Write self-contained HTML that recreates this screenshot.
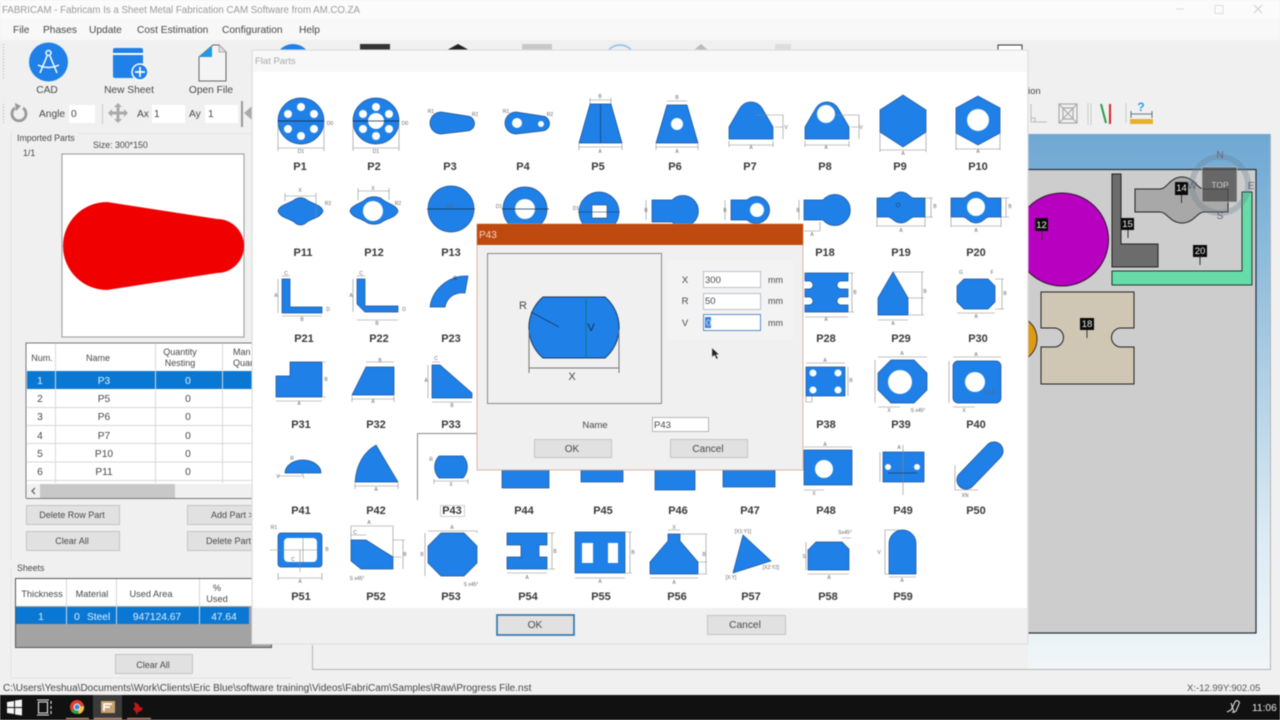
<!DOCTYPE html>
<html><head><meta charset="utf-8"><title>FABRICAM</title>
<style>
html,body{margin:0;padding:0;width:1280px;height:720px;overflow:hidden;background:#f0f0f0}
svg{display:block;position:absolute;left:0;top:0;filter:blur(.4px)}
text{font-family:"Liberation Sans",sans-serif;font-size:10.2px;fill:#484848}
.c{text-anchor:middle}
.l{font-size:11px;font-weight:700;fill:#3a3a3a;text-anchor:middle}
.d{font-size:5px;fill:#666;text-anchor:middle}
.b{fill:#1f80e8;stroke:#1d4f8f;stroke-width:.7}
.n{fill:none;stroke:#8a8a8a;stroke-width:.6}
.btn{fill:#e1e1e1;stroke:#c4c4c4;stroke-width:1}
.lab{fill:#0a0a0a}
.w{fill:#fff}
</style></head><body>
<svg width="1280" height="720" viewBox="0 0 1280 720" xmlns="http://www.w3.org/2000/svg">
<defs>
<linearGradient id="sky" x1="0" y1="0" x2="0" y2="1"><stop offset="0" stop-color="#6ea8d3"/><stop offset=".35" stop-color="#9fc6e0"/><stop offset=".75" stop-color="#dcebf3"/><stop offset="1" stop-color="#f1f6f8"/></linearGradient>
<clipPath id="cv"><rect x="1028" y="134" width="242" height="536"/></clipPath>
</defs>
<rect width="1280" height="720" fill="#f0f0f0"/>
<!-- title bar -->
<rect width="1280" height="19" fill="#fbfbfb"/>
<text x="2" y="13" style="font-size:9.700px;fill:#9a9a9a">FABRICAM - Fabricam Is a Sheet Metal Fabrication CAM Software from AM.CO.ZA</text>
<path d="M1176 9h8" stroke="#ddd"/><rect x="1215" y="5.500" width="8" height="8" fill="none" stroke="#ddd"/><path d="M1254 5l8 8M1262 5l-8 8" stroke="#ccc"/>
<!-- menu -->
<rect y="19" width="1280" height="21" fill="#f8f8f8"/>
<text x="13" y="33">File</text><text x="43" y="33">Phases</text><text x="89" y="33">Update</text><text x="137" y="33">Cost Estimation</text><text x="222" y="33">Configuration</text><text x="299" y="33">Help</text>
<path d="M3.500 44v36M3.500 104v20" stroke="#aaa" stroke-dasharray="1 2"/>
<!-- toolbar -->
<circle cx="48.500" cy="62" r="19.500" fill="#1f80e8"/>
<g fill="none" stroke="#fff" stroke-width="1.500"><circle cx="48.500" cy="53" r="2.500"/><path d="M47 56l-7 17M50 56l7 17M38 65q10.500 5 21 0"/></g>
<rect x="113" y="48" width="30" height="30" rx="2" fill="#1f80e8"/><rect x="113" y="53" width="30" height="2" fill="#fff"/>
<circle cx="140" cy="72" r="8" fill="#1f80e8" stroke="#fff" stroke-width="1.500"/><path d="M135 72h10M140 67v10" stroke="#fff" stroke-width="1.700"/>
<path d="M213 45h6l7 7v29h-27V57z" fill="#f4f4f4" stroke="#666" stroke-width="1"/><path d="M199 57l13-11v11z" fill="#1f9ae8"/><path d="M219 45v7h7" fill="#ddd" stroke="#999" stroke-width=".7"/>
<text x="47" y="93" class="c">CAD</text><text x="129" y="93" class="c">New Sheet</text><text x="211" y="93" class="c">Open File</text>
<path d="M15 108a7 7 0 1 0 8 0" fill="none" stroke="#999" stroke-width="2.800"/><path d="M15 103l6 3-5 5z" fill="#999"/>
<text x="39" y="117">Angle</text><rect x="69" y="105" width="26" height="18" fill="#fff"/><text x="71" y="117">0</text>
<rect x="102" y="104" width="1" height="20" fill="#c8c8c8"/>
<path d="M118 103l4 4h-2.500v4.500h4.500V109l4 4-4 4v-2.500h-4.500v4.500h2.500l-4 4-4-4h2.500v-4.500H112v2.500l-4-4 4-4v2.500h4.500V107H114z" fill="#aaa"/>
<text x="137" y="117">Ax</text><rect x="152" y="105" width="33" height="18" fill="#fff"/><text x="154" y="117">1</text>
<text x="189" y="117">Ay</text><rect x="205" y="105" width="33" height="18" fill="#fff"/><text x="208" y="117">1</text>
<rect x="241" y="101" width="2" height="26" fill="#999"/><path d="M252 106l-8 7 8 7z" fill="#aaa"/>
<!-- peek icons behind dialog -->
<circle cx="293" cy="62" r="18" fill="#1f80e8"/>
<rect x="360" y="44" width="30" height="8" fill="#333"/><path d="M447 50l11-6 11 6z" fill="#222"/>
<rect x="522" y="44" width="30" height="8" fill="#c8c8c8"/><circle cx="620" cy="60" r="15" fill="none" stroke="#9cc9ea" stroke-width="2"/>
<path d="M694 50l7-6 7 6z" fill="#bbb"/><rect x="775" y="44" width="16" height="8" fill="#ddd"/>
<rect x="998" y="45" width="24" height="10" fill="#fff" stroke="#333"/>
<!-- left panel -->
<path d="M11 133.500h2M78 133.500H252M11 134V560" fill="none" stroke="#e4e4e4"/>
<text x="17" y="141" style="font-size:8.800px">Imported Parts</text>
<text x="93" y="148" style="font-size:8.800px">Size: 300*150</text><text x="23" y="156" style="font-size:8.800px">1/1</text>
<rect x="62" y="154" width="182" height="183" fill="#fff" stroke="#999"/>
<path d="M107 202L217 219A27 27 0 0 1 217 273L107 290A44 44 0 0 1 107 202Z" fill="#f00000"/>
<!-- table -->
<rect x="26" y="343" width="226" height="155" fill="#fff"/>
<path d="M26 498V343H252" fill="none" stroke="#777" stroke-width="1"/>
<rect x="27" y="371" width="225" height="18" fill="#0a78d2"/>
<g stroke="#d8d8d8"><path d="M55.500 344V483M155.500 344V483M222.500 344V483M27 407.500H252M27 425.500H252M27 443.500H252M27 462H252M27 480.500H252"/></g>
<rect x="27" y="484" width="225" height="14" fill="#f0f0f0"/><rect x="40" y="484" width="135" height="14" fill="#c8c8c8"/><path d="M35 488l-3 3 3 3" fill="none" stroke="#555" stroke-width="1.200"/>
<path d="M26 498.500H252" stroke="#777"/>
<g><text x="42" y="361" class="c" style="font-size:9px">Num.</text><text x="98" y="361" class="c" style="font-size:9px">Name</text><text x="180" y="355" class="c" style="font-size:9px">Quantity</text><text x="180" y="366" class="c" style="font-size:9px">Nesting</text><text x="233" y="355" style="font-size:9px">Man</text><text x="233" y="366" style="font-size:9px">Quan</text></g>
<text x="40" y="384" class="c" style="fill:#dff0ff">1</text><text x="104" y="384" class="c" style="fill:#dff0ff">P3</text><text x="188" y="384" class="c" style="fill:#dff0ff">0</text>
<text x="40" y="402" class="c">2</text><text x="104" y="402" class="c">P5</text><text x="188" y="402" class="c">0</text>
<text x="40" y="420" class="c">3</text><text x="104" y="420" class="c">P6</text><text x="188" y="420" class="c">0</text>
<text x="40" y="439" class="c">4</text><text x="104" y="439" class="c">P7</text><text x="188" y="439" class="c">0</text>
<text x="40" y="457" class="c">5</text><text x="104" y="457" class="c">P10</text><text x="188" y="457" class="c">0</text>
<text x="40" y="475" class="c">6</text><text x="104" y="475" class="c">P11</text><text x="188" y="475" class="c">0</text>
<rect x="26.500" y="505.500" width="93" height="19" class="btn"/><text x="72" y="518" class="c" style="font-size:9px">Delete Row Part</text>
<rect x="26.500" y="531.500" width="93" height="19" class="btn"/><text x="72" y="544" class="c" style="font-size:9px">Clear All</text>
<rect x="187.500" y="505.500" width="70" height="19" class="btn"/><text x="211" y="518" style="font-size:9px">Add Part &gt;</text>
<rect x="187.500" y="531.500" width="70" height="19" class="btn"/><text x="206" y="544" style="font-size:9px">Delete Part</text>
<!-- sheets -->
<path d="M11 568V678H292" fill="none" stroke="#e4e4e4"/><text x="17" y="571" style="font-size:8.800px">Sheets</text>
<rect x="15.500" y="578.500" width="256" height="69" fill="#a3a3a3" stroke="#555"/>
<rect x="16" y="579" width="236" height="27" fill="#fff"/><rect x="16" y="607" width="233" height="17" fill="#0a78d2"/>
<path d="M66.500 579v45M116.500 579v45M199.500 579v45" stroke="#d0d8e0"/>
<text x="42" y="597" class="c" style="font-size:9.200px">Thickness</text><text x="92" y="597" class="c" style="font-size:9.200px">Material</text><text x="151" y="597" class="c" style="font-size:9.200px">Used Area</text><text x="217" y="591" class="c" style="font-size:9.200px">%</text><text x="217" y="602" class="c" style="font-size:9.200px">Used</text>
<g><text x="41" y="620" class="c" style="fill:#dff0ff">1</text><text x="77" y="620" class="c" style="fill:#dff0ff">0</text><text x="87" y="620" style="fill:#dff0ff">Steel</text><text x="157" y="620" class="c" style="fill:#dff0ff">947124.67</text><text x="224" y="620" class="c" style="fill:#dff0ff">47.64</text></g>
<rect x="115.500" y="654.500" width="77" height="19" class="btn"/><text x="153" y="668" class="c" style="font-size:9px">Clear All</text>
<!-- right canvas -->
<text x="1028" y="94" style="font-size:9.500px">ion</text>
<path d="M1031 104v18h16" fill="none" stroke="#bbb"/><path d="M1031 118h4v4" fill="none" stroke="#bbb"/>
<g fill="none" stroke="#aaa" stroke-width="1.200"><rect x="1059" y="104" width="18" height="19"/><path d="M1059 104l18 19M1077 104l-18 19M1063 108h10v11h-10z"/></g>
<path d="M1088 103v22M1091 103v22" stroke="#ccc"/>
<path d="M1101 104l5 19" stroke="#2a9a48" stroke-width="2"/><path d="M1110 104v20" stroke="#d42a2a" stroke-width="2"/>
<path d="M1126 103v20" stroke="#ccc"/>
<rect x="1130" y="119" width="23" height="5" fill="#e8b030"/><path d="M1131 111v7M1152 111v7M1131 114h21" fill="none" stroke="#456" stroke-width=".8"/><text x="1141" y="111" class="c" style="font-size:12px;fill:#28a0e0;font-weight:700">?</text>
<rect x="1028" y="134" width="242" height="535" fill="url(#sky)"/>
<path d="M1270.500 134V669.500H312.500V645" fill="none" stroke="#b4b4b4"/>
<g clip-path="url(#cv)">
<rect x="1020" y="169.500" width="236" height="463.500" fill="#cdcdcd" stroke="#22303a" stroke-width="1.200"/>
<circle cx="1062" cy="239.500" r="46.500" fill="#b800c0" stroke="#301030"/>
<circle cx="1014" cy="339" r="23" fill="#de9a12" stroke="#333"/>
<path d="M1112 174h9v70h37v23h-46z" fill="#6c6c6c" stroke="#222"/>
<path d="M1135 189H1160C1167 189 1170 177 1182 177C1194 177 1197 189 1204 189H1228V212H1204C1197 212 1194 223 1182 223C1170 223 1167 212 1160 212H1135Z" fill="#a8a8a8" stroke="#222"/>
<path d="M1112 271h130V192h10v93h-140z" fill="#68dca8" stroke="#1c3a30"/>
<path d="M1041 292h93v36h-13a9.500 9.500 0 0 0 0 19h13v37h-93v-37h13a9.500 9.500 0 0 0 0-19h-13z" fill="#cfc7b3" stroke="#222"/>
<g class="lab"><rect x="1035" y="218" width="13" height="13"/><rect x="1121" y="218" width="13" height="12"/><rect x="1175" y="182" width="13" height="13"/><rect x="1193" y="245" width="14" height="12"/><rect x="1080" y="318" width="14" height="12"/></g>
<path d="M1042 231v9M1128 230v8M1181.500 195v8M1200 257v8M1087 330v8" stroke="#333"/>
<g><text x="1041.500" y="228" class="c" style="font-size:9.500px;fill:#eee">12</text><text x="1127.500" y="227" class="c" style="font-size:9.500px;fill:#eee">15</text><text x="1181.500" y="191" class="c" style="font-size:9.500px;fill:#eee">14</text><text x="1200" y="254" class="c" style="font-size:9.500px;fill:#eee">20</text><text x="1087" y="327" class="c" style="font-size:9.500px;fill:#eee">18</text></g>
<circle cx="1220" cy="185" r="28" fill="none" stroke="#6a7f90" stroke-opacity=".32" stroke-width="6"/>
<rect x="1202" y="167" width="35" height="35" fill="#4e4e4e" fill-opacity=".8" stroke="#bbb" stroke-width=".8"/>
<text x="1220" y="188" class="c" style="font-size:8.500px;fill:#ccc">TOP</text>
<text x="1220" y="158" class="c" style="fill:#667">N</text><text x="1220" y="219" class="c" style="fill:#667">S</text><text x="1192" y="189" class="c" style="fill:#667">W</text><text x="1251" y="189" class="c" style="fill:#667">E</text>
</g>
<!-- Flat parts dialog -->
<rect x="252" y="50" width="776" height="594" fill="#f0f0f0" stroke="#ddd"/>
<rect x="253" y="51" width="774" height="21" fill="#f8f8f8"/>
<text x="255" y="64" style="font-size:9.500px;fill:#a8a8a8">Flat Parts</text>
<rect x="253" y="72" width="774" height="536" fill="#fff"/>
<g id="parts">
<!-- P1 -->
<circle cx="301" cy="121" r="23" class="b"/><g class="w"><circle cx="301" cy="107" r="4"/><circle cx="288" cy="114" r="4"/><circle cx="314" cy="114" r="4"/><circle cx="288" cy="129" r="4"/><circle cx="314" cy="129" r="4"/><circle cx="301" cy="136" r="4"/></g>
<path d="M278 121H324" stroke="#123" stroke-width=".8"/><path d="M278 148H324M278 123v28M324 123v28" class="n"/><text x="301" y="153" class="d">D1</text><text x="330" y="125" class="d">D0</text>
<!-- P2 -->
<circle cx="376" cy="121" r="23" class="b"/><g class="w"><circle cx="376" cy="107" r="4"/><circle cx="363" cy="114" r="4"/><circle cx="389" cy="114" r="4"/><circle cx="363" cy="129" r="4"/><circle cx="389" cy="129" r="4"/><circle cx="376" cy="136" r="4"/><circle cx="376" cy="121" r="8"/></g>
<path d="M353 121H399" stroke="#123" stroke-width=".8"/><path d="M353 148H399M353 123v28M399 123v28" class="n"/><text x="376" y="153" class="d">D1</text><text x="405" y="125" class="d">D0</text>
<!-- P3 -->
<path d="M441 112L467 116A7.500 7.500 0 0 1 467 131L441 134A11 11 0 0 1 441 112Z" class="b"/><text x="431" y="113" class="d">R1</text><text x="475" y="116" class="d">R2</text>
<!-- P4 -->
<path d="M516 112L542 116A7.500 7.500 0 0 1 542 131L516 134A11 11 0 0 1 516 112Z" class="b"/><circle cx="517" cy="123" r="5" class="w"/><circle cx="541" cy="124" r="3" class="w"/><text x="506" y="113" class="d">R1</text><text x="550" y="116" class="d">R2</text>
<!-- P5 -->
<path d="M590 104H611L622 143H579Z" class="b"/><path d="M600.500 104V143" stroke="#134" stroke-width=".6"/><path d="M590 100H611M590 98v6M611 98v6M579 147H622M579 144v6M622 144v6" class="n"/><text x="600" y="98" class="d">B</text><text x="600" y="153" class="d">A</text>
<!-- P6 -->
<path d="M667 105H687L698 143H656Z" class="b"/><circle cx="677" cy="124" r="6" class="w"/><path d="M667 101H687M656 147H698M656 144v6M698 144v6" class="n"/><text x="677" y="99" class="d">B</text><text x="677" y="153" class="d">A</text>
<!-- P7 -->
<path d="M729 139V127L740 108A13 13 0 0 1 762 108L773 127V139Z" class="b"/><path d="M729 145H773M729 141v6M773 141v6M755 115H783V139M775 127H783" class="n"/><text x="751" y="149" class="d">A</text><text x="786" y="129" class="d">V</text>
<!-- P8 -->
<path d="M805 139V127L816 108A13 13 0 0 1 838 108L849 127V139Z" class="b"/><circle cx="826" cy="114" r="9" class="w"/><path d="M805 145H849M805 141v6M849 141v6M835 115H859V139M851 127H859" class="n"/><text x="826" y="149" class="d">A</text><text x="861" y="129" class="d">V</text>
<!-- P9 -->
<path d="M903 95L926 110V132L903 147L880 132V110Z" class="b"/><path d="M880 132v20M926 132v20M880 150H926" class="n"/><text x="903" y="155" class="d">A</text>
<!-- P10 -->
<path d="M978 96L1000 108V133L978 145L956 133V108Z" class="b"/><circle cx="978" cy="120" r="11" class="w"/><path d="M956 133v17M1000 133v17M956 149H1000" class="n"/><text x="978" y="153" class="d">A</text>
<!-- P11 -->
<path d="M278 211C279 205 290 203 294 200C298 197 303 197 307 200C311 203 322 205 323 211C322 217 311 219 307 222C303 226 298 226 294 222C290 219 279 217 278 211Z" class="b"/><path d="M285 196H316M285 193v8M316 193v25" class="n"/><text x="300" y="192" class="d">X</text><text x="328" y="205" class="d">R2</text>
<!-- P12 -->
<path d="M350 211C351 205 362 203 366 199C370 196 378 196 382 199C386 203 397 205 398 211C397 217 386 219 382 222C378 225 370 225 366 222C362 219 351 217 350 211Z" class="b"/><circle cx="373" cy="211" r="10" class="w"/><path d="M358 191H389M358 188v12M389 188v12" class="n"/><text x="373" y="190" class="d">X</text><text x="398" y="205" class="d">R2</text>
<!-- P13 -->
<circle cx="451" cy="209" r="23" class="b"/><path d="M427 209H475" stroke="#134" stroke-width=".7"/><text x="450" y="208" class="d">D1</text>
<!-- P14 -->
<circle cx="525" cy="209" r="22" class="b"/><circle cx="525" cy="209" r="10" class="w"/><path d="M502 209H549" stroke="#134" stroke-width=".7"/><text x="499" y="208" class="d">D1</text>
<!-- P15 -->
<circle cx="599" cy="212" r="20" class="b"/><rect x="592" y="205" width="15" height="13" class="w" stroke="#134" stroke-width=".5"/><path d="M578 212H620" stroke="#134" stroke-width=".6"/><text x="576" y="210" class="d">D1</text>
<!-- P16 -->
<path d="M652 200H672A15.500 15.500 0 1 1 672 222H652Z" class="b"/><path d="M646 200v20" class="n"/><text x="646" y="212" class="d">B</text>
<!-- P17 -->
<path d="M731 200H747A13.500 13.500 0 1 1 747 220H731Z" class="b"/><circle cx="757" cy="210" r="7" class="w"/><path d="M725 200v20" class="n"/><text x="725" y="212" class="d">B</text>
<!-- P18 -->
<path d="M804 200H823A15.500 15.500 0 1 1 823 220H804Z" class="b"/><path d="M799 200v20M804 231H820M820 222v9" class="n"/><text x="812" y="236" class="d">A</text><text x="798" y="212" class="d">B</text>
<!-- P19 -->
<path d="M877 198H888C892 198 894 192 901 192C908 192 910 198 914 198H925V217H914C910 217 908 223 901 223C894 223 892 217 888 217H877Z" class="b"/><path d="M877 217v10M925 217v10M877 226H925M925 198h8M925 217h8M931 198v19" class="n"/><text x="901" y="232" class="d">A</text><text x="935" y="208" class="d">B</text><circle cx="898" cy="205" r="2" fill="none" stroke="#134" stroke-width=".4"/>
<!-- P20 -->
<path d="M951 198H963C967 198 969 192 976 192C983 192 985 198 989 198H1001V217H989C985 217 983 223 976 223C969 223 967 217 963 217H951Z" class="b"/><circle cx="976" cy="207" r="9" class="w"/><path d="M951 217v10M1001 217v10M951 226H1001M1001 198h8M1001 217h8M1006 198v19" class="n"/><text x="976" y="232" class="d">A</text><text x="1010" y="208" class="d">B</text>
<!-- P21 -->
<path d="M282 279H290V307H322V313H282Z" class="b"/><path d="M278 279V313M282 276H290M282 316H322" class="n"/><text x="276" y="297" class="d">A</text><text x="302" y="321" class="d">B</text><text x="286" y="275" class="d">C</text><text x="328" y="311" class="d">D</text>
<!-- P22 -->
<path d="M357 279H365V306H398V312H365L357 304Z" class="b"/><path d="M353 279V312M357 276H365M357 320H398" class="n"/><text x="351" y="297" class="d">A</text><text x="377" y="325" class="d">B</text><text x="361" y="275" class="d">C</text><text x="404" y="311" class="d">D</text>
<!-- P23 -->
<path d="M430 307C432 290 448 275 468 276L465 293C455 292 447 297 445 307Z" class="b"/><text x="455" y="280" class="d" style="fill:#134">R</text>
<!-- P28 -->
<path d="M805 273H848V281H841a4 4 0 0 0 0 8h7V297H841a4 4 0 0 0 0 8h7V312H805V305H809a4 4 0 0 0 0-8H805V289H809a4 4 0 0 0 0-8H805Z" class="b"/><path d="M805 317H848M848 273h6M848 312h6M852 273v39" class="n"/><text x="826" y="321" class="d">A</text><text x="855" y="294" class="d">B</text>
<!-- P29 -->
<path d="M878 315V298L893 272L908 298V315Z" class="b"/><path d="M878 320H908M893 272H924M908 298h16M908 315h16M922 272v43" class="n"/><text x="893" y="325" class="d">A</text><text x="925" y="293" class="d">B</text>
<!-- P30 -->
<path d="M964 279H988L995 286V302L988 309H964L957 302V286Z" class="b"/><path d="M957 313H995M995 279h9M995 309h9M1002 279v30" class="n"/><text x="976" y="318" class="d">A</text><text x="1005" y="295" class="d">B</text><text x="961" y="274" class="d">G</text><text x="992" y="274" class="d">F</text>
<!-- P31 -->
<path d="M290 362H322V397H276V376H290Z" class="b"/><path d="M276 401H322M323 362h3M323 397h3" class="n"/><text x="299" y="405" class="d">A</text><text x="326" y="381" class="d">B</text>
<!-- P32 -->
<path d="M366 367H394V395H352Z" class="b"/><path d="M366 362H394M352 399H394M352 396v6M394 396v6" class="n"/><text x="380" y="362" class="d">B</text><text x="373" y="403" class="d">A</text>
<!-- P33 -->
<path d="M432 365H440L472 393V398H432Z" class="b"/><path d="M428 365V398M432 362H440M432 402H472" class="n"/><text x="426" y="382" class="d">A</text><text x="452" y="407" class="d">B</text><text x="436" y="360" class="d">C</text>
<!-- P38 -->
<rect x="806" y="367" width="39" height="29" class="b"/><g class="w"><circle cx="813" cy="373" r="3.500"/><circle cx="838" cy="373" r="3.500"/><circle cx="813" cy="390" r="3.500"/><circle cx="838" cy="390" r="3.500"/></g><path d="M806 363H845M848 367v29M806 396v6H812v-6" class="n"/><text x="825" y="362" class="d">A</text><text x="851" y="382" class="d">B</text>
<!-- P39 -->
<path d="M891 360H914L927 373V390L914 403H891L878 390V373Z" class="b"/><circle cx="900" cy="382" r="12" class="w"/><path d="M878 357H927M875 360v43M878 407H900" class="n"/><text x="902" y="355" class="d">A</text><text x="889" y="412" class="d">X</text><text x="918" y="412" class="d">S x45°</text>
<!-- P40 -->
<rect x="953" y="361" width="48" height="42" rx="5" class="b"/><circle cx="975" cy="382" r="10" class="w"/><path d="M953 357H1001M949 361v42M953 407H975" class="n"/><text x="976" y="356" class="d">A</text><text x="964" y="412" class="d">X</text><text x="990" y="394" class="d">5x R</text>
<!-- P41 -->
<path d="M285 473A18 13 0 0 1 321 473Z" class="b"/><path d="M278 476H302M302 473l2 5" class="n"/><text x="292" y="460" class="d">R</text><text x="278" y="478" class="d">V</text>
<!-- P42 -->
<path d="M355 482Q357 456 376 445L398 482Z" class="b"/><path d="M355 486H398M355 483v6M398 483v6" class="n"/><text x="376" y="491" class="d">A</text>
<!-- P43 -->
<path d="M417.500 500V433.500H490" fill="none" stroke="#8b8b8b" stroke-width="1"/>
<path d="M439 456H463A16 16 0 0 1 463 478H439A16 16 0 0 1 439 456Z" class="b"/><path d="M434 481H468M434 479v5M468 479v5" class="n"/><text x="451" y="486" class="d">X</text><text x="431" y="461" class="d">R</text>
<rect x="440.500" y="505.500" width="24" height="11" fill="#fff" stroke="#bbb" stroke-width=".7"/>
<!-- stubs P44-47 -->
<rect x="502" y="465" width="47" height="23" class="b"/><rect x="581" y="465" width="42" height="17" class="b"/><rect x="655" y="465" width="40" height="25" class="b"/><rect x="723" y="465" width="52" height="22" class="b"/>
<!-- P48 -->
<rect x="804" y="450" width="48" height="35" class="b"/><circle cx="824" cy="469" r="9" class="w"/><path d="M804 447H852M804 490H824" class="n"/><text x="825" y="446" class="d">A</text><text x="814" y="495" class="d">X</text>
<!-- P49 -->
<rect x="883" y="452" width="41" height="30" class="b"/><circle cx="888" cy="467" r="3" class="w"/><circle cx="917" cy="467" r="3" class="w"/><path d="M880 452V482M903 445v50" class="n"/><text x="899" y="449" class="d">A</text><path d="M888 473H917" stroke="#123" stroke-width=".5"/>
<!-- P50 -->
<path d="M966 480L994 451" stroke="#1d4f8f" stroke-width="19" stroke-linecap="round"/><path d="M966 480L994 451" stroke="#1f80e8" stroke-width="17.500" stroke-linecap="round"/><path d="M955 465V490H978" class="n"/><text x="965" y="497" class="d">XN</text>
<!-- P51 -->
<rect x="278" y="533" width="44" height="34" rx="3" class="b"/><rect x="284" y="538" width="33" height="24" rx="4" class="w"/><path d="M270 550H300V572M303 538V562M284 550H317M278 573V580M322 573V580M278 578H322" class="n"/><text x="293" y="561" class="d">C</text><text x="300" y="583" class="d">A</text><text x="274" y="529" class="d">R1</text><text x="327" y="551" class="d">B</text>
<!-- P52 -->
<path d="M351 540H366L393 557V569H361L351 561Z" class="b"/><path d="M351 526H393M351 526v14M393 526v31M393 540h12M403 540v29M393 557h8M351 535H366" class="n"/><text x="369" y="524" class="d">A</text><text x="355" y="534" class="d">C</text><text x="405" y="556" class="d">B</text><text x="357" y="580" class="d">S x45°</text>
<!-- P53 -->
<path d="M441 533H464L477 546V563L464 576H441L428 563V546Z" class="b"/><path d="M428 531H477V533M425 533V576" class="n"/><text x="452" y="529" class="d">A</text><text x="422" y="556" class="d">B</text><text x="471" y="586" class="d">S x45°</text>
<!-- P54 -->
<path d="M507 533H547V545H539V557H547V569H507V557H521V545H507Z" class="b"/><path d="M507 573H547M547 533h8M547 569h8M552 533v36" class="n"/><text x="527" y="579" class="d">A</text><text x="555" y="553" class="d">B</text>
<!-- P55 -->
<rect x="575" y="532" width="50" height="41" class="b"/><rect x="582" y="543" width="11" height="20" class="w"/><rect x="608" y="543" width="10" height="20" class="w"/><path d="M575 578H625M625 532h7M625 573h7M630 532v41" class="n"/><text x="600" y="583" class="d">A</text><text x="633" y="554" class="d">B</text>
<!-- P56 -->
<path d="M650 574V562L668 541V534H680V541L698 562V574Z" class="b"/><path d="M650 578H698M680 534H707M698 562h9M698 574h9M706 534v40M668 530H680" class="n"/><text x="674" y="584" class="d">A</text><text x="704" y="556" class="d">B</text><text x="674" y="529" class="d">X</text>
<!-- P57 -->
<path d="M743 535L771 561L733 573Z" class="b"/><text x="743" y="533" class="d">[X1:Y1]</text><text x="771" y="569" class="d">[X2:Y2]</text><text x="731" y="579" class="d">[X:Y]</text>
<!-- P58 -->
<path d="M816 542H842L849 549V570H808V550Z" class="b"/><path d="M808 574H849M806 542v28M842 538H851" class="n"/><text x="829" y="579" class="d">A</text><text x="804" y="558" class="d">S</text><text x="845" y="534" class="d">Sx45°</text>
<!-- P59 -->
<path d="M889 574V543.500A13.500 13.500 0 0 1 916 543.500V574Z" class="b"/><path d="M889 577H916M885 530V574M885 530H900M885 574H889" class="n"/><text x="902" y="582" class="d">A</text><text x="879" y="554" class="d">V</text>
</g>
<g>
<text x="300" y="170" class="l">P1</text><text x="374" y="170" class="l">P2</text><text x="450" y="170" class="l">P3</text><text x="523" y="170" class="l">P4</text><text x="598" y="170" class="l">P5</text><text x="675" y="170" class="l">P6</text><text x="750" y="170" class="l">P7</text><text x="825" y="170" class="l">P8</text><text x="900" y="170" class="l">P9</text><text x="978" y="170" class="l">P10</text>
<text x="303" y="256" class="l">P11</text><text x="374" y="256" class="l">P12</text><text x="451" y="256" class="l">P13</text><text x="825" y="256" class="l">P18</text><text x="901" y="256" class="l">P19</text><text x="976" y="256" class="l">P20</text>
<text x="304" y="342" class="l">P21</text><text x="379" y="342" class="l">P22</text><text x="451" y="342" class="l">P23</text><text x="826" y="342" class="l">P28</text><text x="901" y="342" class="l">P29</text><text x="978" y="342" class="l">P30</text>
<text x="301" y="428" class="l">P31</text><text x="376" y="428" class="l">P32</text><text x="451" y="428" class="l">P33</text><text x="826" y="428" class="l">P38</text><text x="901" y="428" class="l">P39</text><text x="976" y="428" class="l">P40</text>
<text x="301" y="514" class="l">P41</text><text x="376" y="514" class="l">P42</text><text x="452" y="514" class="l">P43</text><text x="524" y="514" class="l">P44</text><text x="603" y="514" class="l">P45</text><text x="678" y="514" class="l">P46</text><text x="750" y="514" class="l">P47</text><text x="826" y="514" class="l">P48</text><text x="903" y="514" class="l">P49</text><text x="976" y="514" class="l">P50</text>
<text x="301" y="600" class="l">P51</text><text x="376" y="600" class="l">P52</text><text x="451" y="600" class="l">P53</text><text x="528" y="600" class="l">P54</text><text x="601" y="600" class="l">P55</text><text x="677" y="600" class="l">P56</text><text x="751" y="600" class="l">P57</text><text x="828" y="600" class="l">P58</text><text x="903" y="600" class="l">P59</text>
</g>
<rect x="497" y="615" width="77" height="20" fill="#e1e1e1" stroke="#2a72aa" stroke-width="1.600"/><text x="535" y="628" class="c">OK</text>
<rect x="707.500" y="615.500" width="78" height="19" class="btn"/><text x="745" y="628" class="c">Cancel</text>
<!-- P43 dialog -->
<rect x="477" y="224" width="326" height="246" fill="#f0f0f0" stroke="#d8a890" stroke-width=".8"/>
<rect x="477" y="224" width="326" height="21" fill="#bf4a10"/>
<text x="479" y="238" style="font-size:10px;fill:#f6d5c5">P43</text>
<rect x="487.500" y="253.500" width="174" height="150" fill="#f0f0f0" stroke="#8a8a8a"/>
<path d="M543 297H605A40 40 0 0 1 605 358H543A40 40 0 0 1 543 297Z" fill="#1f80e8" stroke="#1a3a60" stroke-width="1"/>
<path d="M586 297V358" stroke="#0a7a80" stroke-width="1"/><path d="M531 312L559 327" stroke="#1a3a60" stroke-width=".8"/>
<path d="M529 330V373M619 330V373M529 368H619" fill="none" stroke="#777" stroke-width="1"/>
<text x="523" y="309" class="c" style="font-size:11px">R</text><text x="591" y="331" class="c" style="font-size:11px;fill:#134">V</text><text x="572" y="380" class="c" style="font-size:11px">X</text>
<rect x="667" y="260" width="126" height="80" fill="#f3f3f3"/>
<rect x="703.500" y="271.500" width="57" height="16" fill="#fff" stroke="#b8c0c8"/><rect x="703.500" y="293.500" width="57" height="16" fill="#fff" stroke="#b8c0c8"/><rect x="703.500" y="314.500" width="57" height="16" fill="#fff" stroke="#5a8cc8"/>
<rect x="705" y="317" width="6" height="11" fill="#3a80d8"/>
<text x="685" y="283" class="c" style="font-size:9.500px">X</text><text x="685" y="304" class="c" style="font-size:9.500px">R</text><text x="685" y="326" class="c" style="font-size:9.500px">V</text>
<text x="705" y="283" style="font-size:9.500px">300</text><text x="705" y="304" style="font-size:9.500px">50</text><text x="706" y="326" style="font-size:9.500px;fill:#cfe2f8">0</text>
<text x="768" y="283" style="font-size:9px">mm</text><text x="768" y="304" style="font-size:9px">mm</text><text x="768" y="326" style="font-size:9px">mm</text>
<path d="M712 348v9l2.500-2 2 4 1.500-.8-2-3.700h3z" fill="#222" stroke="#ccc" stroke-width=".4"/>
<text x="595" y="428" class="c" style="font-size:9.500px">Name</text>
<rect x="652.500" y="417.500" width="56" height="14" fill="#fff" stroke="#b8b8b8"/><text x="654" y="428" style="font-size:9.500px">P43</text>
<rect x="534.500" y="439.500" width="77" height="18" class="btn"/><text x="572" y="452" class="c" style="font-size:10px">OK</text>
<rect x="670.500" y="439.500" width="77" height="18" class="btn"/><text x="708" y="452" class="c" style="font-size:10px">Cancel</text>
<!-- status -->
<rect y="680" width="1280" height="15" fill="#f0f0f0"/>
<text x="3" y="691" style="font-size:10px">C:\Users\Yeshua\Documents\Work\Clients\Eric Blue\software training\Videos\FabriCam\Samples\Raw\Progress File.nst</text>
<text x="1187" y="691" style="font-size:9.500px;fill:#555">X:-12.99Y:902.05</text>
<!-- taskbar -->
<rect y="695" width="1280" height="25" fill="#111"/>
<rect x="93" y="695" width="29" height="25" fill="#3a3a3a"/>
<path d="M7 702l7-1v6H7zM15 700.500l7-1v7.500h-7zM7 708h7v6l-7-1zM15 708h7v7.500l-7-1z" fill="#f4f4f4"/>
<path d="M38.500 702h9v11h-9zM37 700h12M37 715h12M51 701v3M51 706v3M51 711v3" fill="none" stroke="#e8e8e8" stroke-width="1.100"/>
<circle cx="77" cy="707" r="7" fill="#e33b2e"/><path d="M77 707L71 711A7 7 0 0 0 80 713Z" fill="#2da44e"/><path d="M77 707L84 706A7 7 0 0 1 79 714Z" fill="#fbc02d"/><circle cx="77" cy="707" r="3" fill="#3a86e8" stroke="#eee"/>
<rect x="101" y="701" width="14" height="12" fill="#c8a070"/><path d="M104 711V704H112M104 707H110" stroke="#fff" stroke-width="1.700" fill="none"/>
<path d="M134 702l4 2 2 3 3 1-2 3-3 1-1 3-2-4-2-2 2-2z" fill="#c01818"/>
<path d="M66 718.500h23M94 718.500h28M127 718.500h24" stroke="#d09878" stroke-width="1.200"/>
<path d="M1227 712l4-2 4-8q1-2 3-1t1 3l-3 7q-2 2-4 1M1231 703l3 9" fill="none" stroke="#ddd" stroke-width="1.100"/>
<text x="1252" y="711" style="font-size:10.200px;fill:#e8e8e8">11:06</text>
</svg>
</body></html>
